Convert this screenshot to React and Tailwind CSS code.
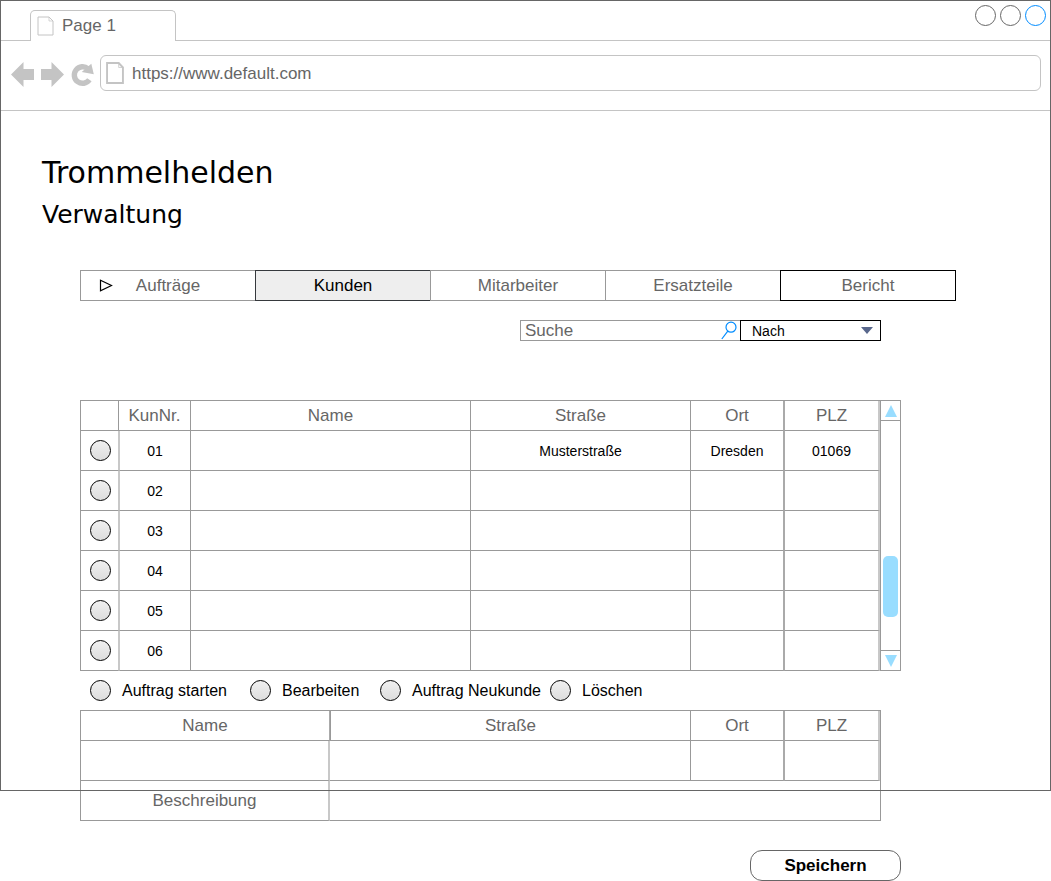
import React from 'react';

const tabs = ['Aufträge', 'Kunden', 'Mitarbeiter', 'Ersatzteile', 'Bericht'];

const tabStyles = {
  Kunden: 'border-[#36393d] bg-[#eeeeee] text-black',
  Mitarbeiter: 'border-[#999999] text-[#666666]',
  Bericht: 'z-10 border-black text-[#666666]',
};

const customers = [
  { nr: '01', name: '', street: 'Musterstraße', city: 'Dresden', zip: '01069' },
  { nr: '02', name: '', street: '', city: '', zip: '' },
  { nr: '03', name: '', street: '', city: '', zip: '' },
  { nr: '04', name: '', street: '', city: '', zip: '' },
  { nr: '05', name: '', street: '', city: '', zip: '' },
  { nr: '06', name: '', street: '', city: '', zip: '' },
];

const radioClass =
  'block size-[21px] shrink-0 appearance-none rounded-full border border-black bg-linear-to-b from-[#f0f0f0] to-[#dddddd] checked:from-[#99ddff] checked:to-[#66bbee]';
const head = 'h-[30px] border-b border-[#999999] p-0 text-center font-normal';
const cell = 'h-10 border-b border-[#999999] p-0 text-center';

function PageIcon({ className, strokeWidth }) {
  return (
    <svg viewBox="0 0 17 20" className={className} fill="none" stroke="#c4c4c4" strokeWidth={strokeWidth} preserveAspectRatio="none">
      <path d="M1 1H12L16 5V19H1Z" />
      <path d="M12 1V5H16" strokeWidth="0.7" />
    </svg>
  );
}

function BrowserChrome() {
  return (
    <header className="text-[17px] leading-5 text-[#666666]">
      <div className="flex h-[41px]">
        <div className="w-[30px] border-b border-[#c4c4c4]" />
        <div className="mt-[10px] flex w-[146px] items-center rounded-t-[5px] border border-b-0 border-[#c4c4c4] pl-[6px]">
          <PageIcon className="h-5 w-[17px]" strokeWidth="1" />
          <span className="ml-2">Page 1</span>
        </div>
        <div className="flex flex-1 justify-end gap-1 border-b border-[#c4c4c4] pt-[5px] pr-[5px]">
          <button aria-label="Minimieren" className="size-[21px] rounded-full border border-[#666666]" />
          <button aria-label="Maximieren" className="size-[21px] rounded-full border border-[#666666]" />
          <button aria-label="Schließen" className="size-[21px] rounded-full border border-[#008cff]" />
        </div>
      </div>
      <div className="flex h-[70px] border-b border-[#c4c4c4] pt-[14px] pr-[10px] pl-[11px]">
        <div className="flex h-[38px] items-center gap-[7px]">
          <button aria-label="Zurück">
            <svg className="block h-[25px] w-[23px]" viewBox="0 0 23 25" fill="#c4c4c4">
              <path d="M0 12.5L12.5 0V7H23V18H12.5V25Z" />
            </svg>
          </button>
          <button aria-label="Vor">
            <svg className="block h-[25px] w-[23px]" viewBox="0 0 23 25" fill="#c4c4c4">
              <path d="M23 12.5L10.5 0V7H0V18H10.5V25Z" />
            </svg>
          </button>
          <button aria-label="Neu laden">
            <svg className="block h-[25px] w-[23px]" viewBox="0 0 23 25">
              <path d="M18.4 17.8A8.3 8.3 0 1 1 17 6.7" fill="none" stroke="#c4c4c4" strokeWidth="5.4" />
              <path d="M20.3 1.7L22.8 12.3L10.7 10Z" fill="#c4c4c4" />
            </svg>
          </button>
        </div>
        <label className="ml-[6px] flex h-9 flex-1 items-center rounded-[6px] border border-[#c4c4c4] pl-[5px]">
          <PageIcon className="h-[22px] w-[18px]" strokeWidth="1.8" />
          <input aria-label="Adresse" defaultValue="https://www.default.com" className="ml-2 min-w-0 flex-1 pt-[2px] outline-none" />
        </label>
      </div>
    </header>
  );
}

function Scrollbar() {
  return (
    <div className="flex w-[21px] shrink-0 flex-col border border-[#999999]">
      <button aria-label="Nach oben" className="flex h-5 items-center justify-center border-b border-[#999999]">
        <svg className="h-3 w-3" viewBox="0 0 12 12" fill="#99ddff"><path d="M6 0L12 12H0Z" /></svg>
      </button>
      <div className="flex-1 px-[2px] pt-[135px]">
        <div className="h-[61px] rounded-[5px] bg-[#99ddff]" />
      </div>
      <button aria-label="Nach unten" className="flex h-5 items-center justify-center border-t border-[#999999]">
        <svg className="h-3 w-3" viewBox="0 0 12 12" fill="#99ddff"><path d="M0 0H12L6 12Z" /></svg>
      </button>
    </div>
  );
}

function CustomerTable() {
  return (
    <div className="mt-[59px] flex max-w-[821px]">
      <table className="w-full table-fixed border-separate border-spacing-0 border-t border-l border-[#999999] text-sm">
        <colgroup>
          <col className="w-[38px]" />
          <col className="w-[72px]" />
          <col />
          <col className="w-[220px]" />
          <col className="w-[93px]" />
          <col className="w-[96px]" />
        </colgroup>
        <thead className="text-[17px] leading-6 text-[#666666]">
          <tr>
            <th className={`${head} border-r`} aria-label="Auswahl" />
            <th className={`${head} border-r`}>KunNr.</th>
            <th className={`${head} border-r`}>Name</th>
            <th className={`${head} border-r`}>Straße</th>
            <th className={`${head} border-r border-r-[#aaaaaa]`}>Ort</th>
            <th className={`${head} border-r-2 border-l border-r-[#c8c8c8] border-l-[#aaaaaa]`}>PLZ</th>
          </tr>
        </thead>
        <tbody>
          {customers.map((c) => (
            <tr key={c.nr}>
              <td className={`${cell} border-r border-r-[#c8c8c8]`}>
                <input type="radio" name="kunde" aria-label={`Kunde ${c.nr}`} className={`${radioClass} ml-[9px]`} />
              </td>
              <td className={`${cell} border-r border-l border-l-[#c8c8c8]`}>{c.nr}</td>
              <td className={`${cell} border-r`}>{c.name}</td>
              <td className={`${cell} border-r`}>{c.street}</td>
              <td className={`${cell} border-r border-r-[#aaaaaa]`}>{c.city}</td>
              <td className={`${cell} border-r-2 border-l border-r-[#c8c8c8] border-l-[#aaaaaa]`}>{c.zip}</td>
            </tr>
          ))}
        </tbody>
      </table>
      <Scrollbar />
    </div>
  );
}

function Action({ label, className }) {
  return (
    <label className={`flex items-center gap-[11px] whitespace-nowrap ${className}`}>
      <input type="radio" name="aktion" className={radioClass} />
      {label}
    </label>
  );
}

function DetailTable() {
  return (
    <table className="mt-[9px] w-full max-w-[801px] table-fixed border-separate border-spacing-0 border-t border-r border-l border-[#999999] text-[17px] leading-6 text-[#666666]">
      <colgroup>
        <col className="w-[249px]" />
        <col />
        <col className="w-[93px]" />
        <col className="w-[96px]" />
      </colgroup>
      <thead>
        <tr>
          <th className={`${head} border-r border-r-[#aaaaaa]`}>Name</th>
          <th className={`${head} border-r border-l`}>Straße</th>
          <th className={`${head} border-r border-r-[#aaaaaa]`}>Ort</th>
          <th className={`${head} border-r-2 border-l border-r-[#c8c8c8] border-l-[#aaaaaa]`}>PLZ</th>
        </tr>
      </thead>
      <tbody>
        <tr>
          <td className={`${cell} border-r-2 border-r-[#c8c8c8]`} />
          <td className={`${cell} border-r`} />
          <td className={`${cell} border-r border-r-[#aaaaaa]`} />
          <td className={`${cell} border-r-2 border-l border-r-[#c8c8c8] border-l-[#aaaaaa]`} />
        </tr>
        <tr>
          <th className={`${cell} border-r-2 border-r-[#c8c8c8] font-normal`}>Beschreibung</th>
          <td className={cell} colSpan={3} />
        </tr>
      </tbody>
    </table>
  );
}

export default function App() {
  return (
    <div className="relative bg-white font-['Liberation_Sans',Arial,sans-serif] text-black">
      <div className="pointer-events-none absolute inset-x-0 top-0 bottom-[90px] border border-[#666666]" />
      <BrowserChrome />
      <main className="pt-11 pr-[95px] pl-20">
        <div className="-ml-[38px] font-['DejaVu_Sans',Verdana,sans-serif]">
          <h1 className="text-[30px] leading-9">Trommelhelden</h1>
          <h2 className="mt-2 text-[25px] leading-8">Verwaltung</h2>
        </div>

        <nav className="mt-[39px] flex max-w-[876px]">
          {tabs.map((tab, i) => (
            <a
              key={tab}
              href={`#${tab}`}
              className={`relative flex h-[31px] flex-1 items-center justify-center border text-[17px] ${i > 0 ? '-ml-px' : ''} ${tabStyles[tab] || 'border-[#999999] text-[#666666]'}`}
            >
              {i === 0 && (
                <svg className="absolute left-[18px] h-[13px] w-[14px]" viewBox="0 0 14 13" fill="none" stroke="black" strokeWidth="1.2">
                  <path d="M1.5 1.2L12.5 6.5L1.5 11.8Z" />
                </svg>
              )}
              {tab}
            </a>
          ))}
        </nav>

        <div className="mt-[19px] flex max-w-[801px] justify-end">
          <label className="flex h-[21px] w-[220px] items-center border border-r-0 border-[#999999] pr-[3px] pl-1">
            <input type="search" aria-label="Suche" placeholder="Suche" className="min-w-0 flex-1 text-[17px] leading-[19px] outline-none placeholder:text-[#666666]" />
            <svg className="h-[19px] w-4" viewBox="0 0 16 19" fill="none" stroke="#008cff" strokeWidth="1.2">
              <circle cx="10" cy="6.2" r="5" />
              <path d="M6.8 10.2L0.8 18" />
            </svg>
          </label>
          <div className="relative">
            <select aria-label="Nach" className="block h-[21px] w-[141px] appearance-none border border-black bg-white pt-[2px] pl-[11px] text-sm leading-[17px] outline-none">
              <option>Nach</option>
              <option>Name</option>
              <option>Ort</option>
              <option>PLZ</option>
            </select>
            <svg className="pointer-events-none absolute top-[7px] right-2 h-[7px] w-3" viewBox="0 0 12 7" fill="#58678c">
              <path d="M0 0H12L6 7Z" />
            </svg>
          </div>
        </div>

        <CustomerTable />

        <div className="mt-[9px] flex pl-[10px] text-base leading-[21px]">
          <Action label="Auftrag starten" className="w-40" />
          <Action label="Bearbeiten" className="w-[130px]" />
          <Action label="Auftrag Neukunde" className="w-[170px]" />
          <Action label="Löschen" className="" />
        </div>

        <DetailTable />

        <div className="mt-[29px] flex max-w-[821px] justify-end">
          <button className="h-[31px] w-[151px] rounded-xl border border-[#666666] text-[17px] font-bold">Speichern</button>
        </div>
      </main>
    </div>
  );
}
